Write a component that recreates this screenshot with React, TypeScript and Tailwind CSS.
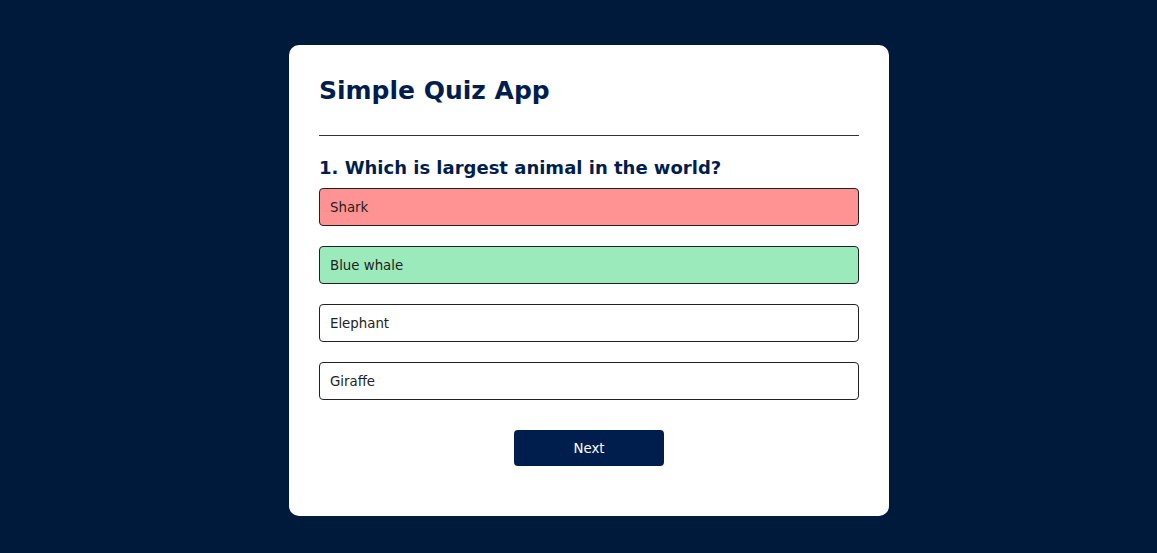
import React from "react";

const options = [
  { text: "Shark", cls: "bg-[#ff9393]" },
  { text: "Blue whale", cls: "bg-[#9aeabc]" },
  { text: "Elephant", cls: "bg-white" },
  { text: "Giraffe", cls: "bg-white" },
];

export default function App() {
  return (
    <div
      className="min-h-[553px] w-full bg-[#001a3c] pt-[45px]"
      style={{ fontFamily: '"DejaVu Sans", Verdana, sans-serif' }}
    >
      <div className="ml-[289px] w-[600px] rounded-[10px] bg-white p-[30px]">
        <h1 className="h-[61px] border-b border-[#333] pb-[30px] pt-[2px] text-[25px] font-bold leading-[28px] text-[#001e4d]">
          Simple Quiz App
        </h1>
        <div className="py-[20px]">
          <h2 className="h-[22px] pt-[1px] text-[18px] font-bold leading-[21px] text-[#001e4d]">
            1. Which is largest animal in the world?
          </h2>
          <div className="mt-[10px] flex flex-col gap-[20px]">
            {options.map((o) => (
              <button
                key={o.text}
                className={`h-[38px] w-full rounded-[4px] border border-[#222] px-[10px] pt-[2px] text-left text-[13.33px] text-[#222] ${o.cls}`}
              >
                {o.text}
              </button>
            ))}
          </div>
          <button className="mx-auto mt-[30px] block h-[36px] w-[150px] rounded-[4px] bg-[#001e4d] pt-[2px] text-[13.33px] text-white">
            Next
          </button>
        </div>
      </div>
    </div>
  );
}
